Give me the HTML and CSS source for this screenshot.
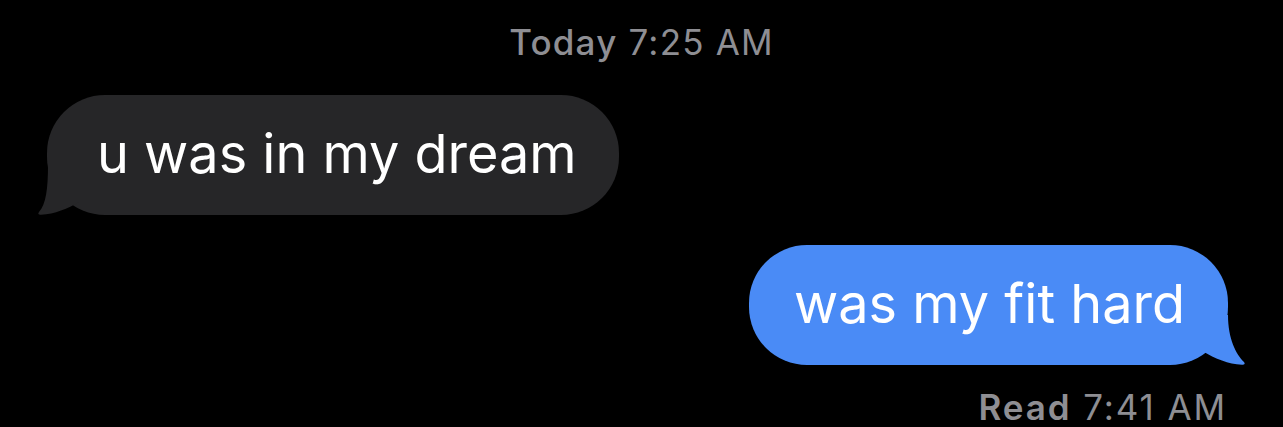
FILE: index.html
```html
<!DOCTYPE html>
<html>
<head>
    <meta charset="UTF-8">
    <link rel="stylesheet" href="styles.css">
</head>
<body>
    <div class="thread">
        <div class="stamp"><span class="stamp-day">Today</span> 7:25 AM</div>

        <div class="row row-in">
            <div class="bubble bubble-in">
                u was in my dream
                <svg class="tail tail-in" width="50" height="50" viewBox="0 0 50 50">
                    <path d="M13 0 C13 24 11 39 4 47 C2.5 48.8 3.5 50 6 49.8 C20 49 32 44 46 36 L46 0 Z" fill="#262628"/>
                </svg>
            </div>
        </div>

        <div class="row row-out">
            <div class="bubble bubble-out">
                was my fit hard
                <svg class="tail tail-out" width="50" height="50" viewBox="0 0 50 50">
                    <path d="M30 0 C30 24 38 39 46 47 C47.5 48.8 46.5 50 44 49.8 C30 49 18 44 4 36 L4 0 Z" fill="#4a8bf6"/>
                </svg>
            </div>
        </div>

        <div class="receipt"><span class="receipt-label">Read</span> 7:41 AM</div>
    </div>
</body>
</html>
```

FILE: styles.css
```css
* {
    box-sizing: border-box;
}

body {
    margin: 0;
    width: 1283px;
    height: 427px;
    background: #000;
    font-family: Inter, 'Liberation Sans', sans-serif;
    overflow: hidden;
}

.thread {
    display: flex;
    flex-direction: column;
    padding-top: 22px;
}

.stamp {
    text-align: center;
    color: #8e8e93;
    font-size: 35px;
    line-height: 40px;
    letter-spacing: 1.2px;
    margin-bottom: 33px;
}

.stamp-day {
    font-weight: 500;
}

.row {
    display: flex;
}

.row-in {
    justify-content: flex-start;
    padding-left: 47px;
    margin-bottom: 30px;
}

.row-out {
    justify-content: flex-end;
    padding-right: 55px;
    margin-bottom: 22px;
}

.bubble {
    position: relative;
    height: 120px;
    display: flex;
    align-items: center;
    font-size: 54px;
    color: #fff;
    border-radius: 58px;
    padding-bottom: 4px;
}

.bubble-in {
    background: #262628;
    padding-left: 50px;
    padding-right: 42px;
}

.bubble-out {
    background: #4a8bf6;
    padding-left: 45px;
    padding-right: 43px;
}

.tail {
    position: absolute;
    bottom: 0;
}

.tail-in {
    left: -12px;
}

.tail-out {
    right: -20px;
}

.receipt {
    text-align: right;
    color: #8e8e93;
    font-size: 35px;
    line-height: 40px;
    letter-spacing: 1.9px;
    padding-right: 56px;
}

.receipt-label {
    font-weight: 600;
}
```
